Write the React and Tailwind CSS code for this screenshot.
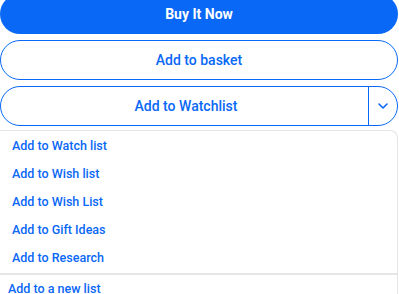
import React from 'react';

const lists = ['Add to Watch list', 'Add to Wish list', 'Add to Wish List', 'Add to Gift Ideas', 'Add to Research'];

const App = () => {
  return (
    <div className="w-[399px] h-[294px] overflow-hidden bg-white font-['Roboto',sans-serif]">
      <div className="w-[398px] flex flex-col gap-[6px] -mt-[6px]">
        <button className="h-10 rounded-full bg-[#0968f6] text-white font-bold text-[14px]">
          Buy It Now
        </button>
        <button className="h-10 rounded-full border border-[#0968f6] text-[#0968f6] text-[14px] font-medium">
          Add to basket
        </button>
        <div className="h-10 rounded-full border border-[#0968f6] flex text-[#0968f6]">
          <div className="flex-1 flex items-center justify-center text-[14px] font-medium pl-[3px]">Add to Watchlist</div>
          <div className="w-[29px] border-l border-[#0968f6] flex items-center justify-center">
            <svg width="12" height="8" viewBox="0 0 12 8" fill="none">
              <path d="M2 2l4 4 4-4" stroke="#0968f6" strokeWidth="1.6" strokeLinecap="round" strokeLinejoin="round" />
            </svg>
          </div>
        </div>
      </div>
      <div className="mt-[4px] w-[398px] border-t border-r border-[#e5e5e5] rounded-tr-lg">
        <ul className="pt-px pb-[1px]">
          {lists.map((l) => (
            <li key={l} className="h-7 flex items-center pl-3 text-[12.5px] font-medium text-[#0968f6]">{l}</li>
          ))}
        </ul>
        <div className="border-t-2 border-[#e5e5e5] h-[30px] flex items-center pl-2 text-[12.5px] font-medium text-[#0968f6]">
          Add to a new list
        </div>
      </div>
    </div>
  );
};

export default App;
